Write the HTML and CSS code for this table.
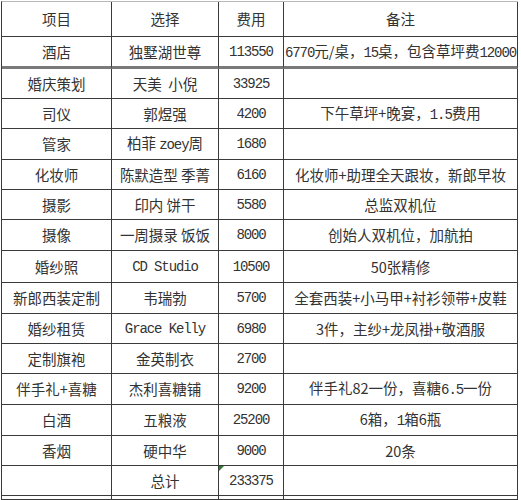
FILE: index.html
```html
<!DOCTYPE html>
<html lang="zh">
<head>
<meta charset="utf-8">
<link rel="stylesheet" href="styles.css">
</head>
<body>
<div class="sheet">
  <div class="c"><span>项目</span></div><div class="c"><span>选择</span></div><div class="c"><span>费用</span></div><div class="c"><span>备注</span></div>

  <div class="c"><span>酒店</span></div><div class="c"><span>独墅湖世尊</span></div><div class="c"><span class="m">113550</span></div><div class="c"><span><span class="m">6770</span>元/桌，<span class="m">15</span>桌，包含草坪费<span class="m">12000</span></span></div>
  <div class="c"><span>婚庆策划</span></div><div class="c"><span>天美&nbsp;&nbsp;小倪</span></div><div class="c"><span class="m">33925</span></div><div class="c"></div>
  <div class="c"><span>司仪</span></div><div class="c"><span>郭煜强</span></div><div class="c"><span class="m">4200</span></div><div class="c"><span>下午草坪+晚宴，<span class="m">1.5</span>费用</span></div>
  <div class="c"><span>管家</span></div><div class="c"><span>柏菲 <span class="m">zoey</span>周</span></div><div class="c"><span class="m">1680</span></div><div class="c"></div>
  <div class="c"><span>化妆师</span></div><div class="c"><span>陈默造型 季菁</span></div><div class="c"><span class="m">6160</span></div><div class="c"><span>化妆师+助理全天跟妆，新郎早妆</span></div>
  <div class="c"><span>摄影</span></div><div class="c"><span>印内 饼干</span></div><div class="c"><span class="m">5580</span></div><div class="c"><span>总监双机位</span></div>
  <div class="c"><span>摄像</span></div><div class="c"><span>一周摄录 饭饭</span></div><div class="c"><span class="m">8000</span></div><div class="c sel"><span>创始人双机位，加航拍</span></div>
  <div class="c"><span>婚纱照</span></div><div class="c"><span class="m">CD Studio</span></div><div class="c"><span class="m">10500</span></div><div class="c"><span>50张精修</span></div>
  <div class="c"><span>新郎西装定制</span></div><div class="c"><span>韦瑞勃</span></div><div class="c"><span class="m">5700</span></div><div class="c"><span>全套西装+小马甲+衬衫领带+皮鞋</span></div>
  <div class="c"><span>婚纱租赁</span></div><div class="c"><span class="m">Grace Kelly</span></div><div class="c"><span class="m">6980</span></div><div class="c"><span>3件，主纱+龙凤褂+敬酒服</span></div>
  <div class="c"><span>定制旗袍</span></div><div class="c"><span>金英制衣</span></div><div class="c"><span class="m">2700</span></div><div class="c"></div>
  <div class="c"><span>伴手礼+喜糖</span></div><div class="c"><span>杰利喜糖铺</span></div><div class="c"><span class="m">9200</span></div><div class="c"><span>伴手礼82一份，喜糖<span class="m">6.5</span>一份</span></div>
  <div class="c"><span>白酒</span></div><div class="c"><span>五粮液</span></div><div class="c"><span class="m">25200</span></div><div class="c"><span>6箱，<span class="m">1</span>箱6瓶</span></div>
  <div class="c"><span>香烟</span></div><div class="c"><span>硬中华</span></div><div class="c"><span class="m">9000</span></div><div class="c"><span>20条</span></div>
  <div class="c"></div><div class="c"><span>总计</span></div><div class="c tri"><span class="m">233375</span></div><div class="c"></div>
  <div class="c"></div><div class="c"></div><div class="c"></div><div class="c"></div>
</div>
</body>
</html>
```

FILE: styles.css
```css
html, body {
  margin: 0;
  padding: 0;
  background: #ffffff;
}
body {
  width: 521px;
  height: 500px;
  overflow: hidden;
}
.sheet {
  display: grid;
  grid-template-columns: 110px 107px 65px 234px;
  grid-template-rows: 35px 32px 30px 30px 31px 30px 30px 31px 32px 31px 30px 30px 31px 31px 30px 30px 4px;
  margin: 1px 0 0 1px;
  border-left: 1px solid #3a3a3a;
  border-top: 1px solid #b8b8b8;
  width: 517px;
  height: 499px;
  overflow: hidden;
  box-sizing: border-box;
  font-family: "Noto Sans CJK SC", "Noto Sans", sans-serif;
  font-size: 14.5px;
  color: #333333;
}
.c {
  box-sizing: border-box;
  border-right: 1px solid #3a3a3a;
  border-bottom: 1px solid #3a3a3a;
  display: flex;
  align-items: center;
  justify-content: center;
  white-space: nowrap;
  position: relative;
  min-height: 0;
}
.c > span {
  line-height: 18px;
}
.sheet > .c:nth-child(n+5):nth-child(-n+8) {
  border-bottom: 3px solid #7a7a7a;
}
.m {
  font-family: "Liberation Mono", "DejaVu Sans Mono", "Noto Sans CJK SC", monospace;
  font-size: 14px;
  letter-spacing: -1.1px;
}
.sel::after {
  content: "";
  position: absolute;
  right: -4px;
  top: 2px;
  bottom: -1px;
  width: 2px;
  background: #5fa040;
}
.tri::before {
  content: "";
  position: absolute;
  left: 0;
  top: 0;
  border-top: 5px solid #2f7a30;
  border-right: 5px solid transparent;
}
```
